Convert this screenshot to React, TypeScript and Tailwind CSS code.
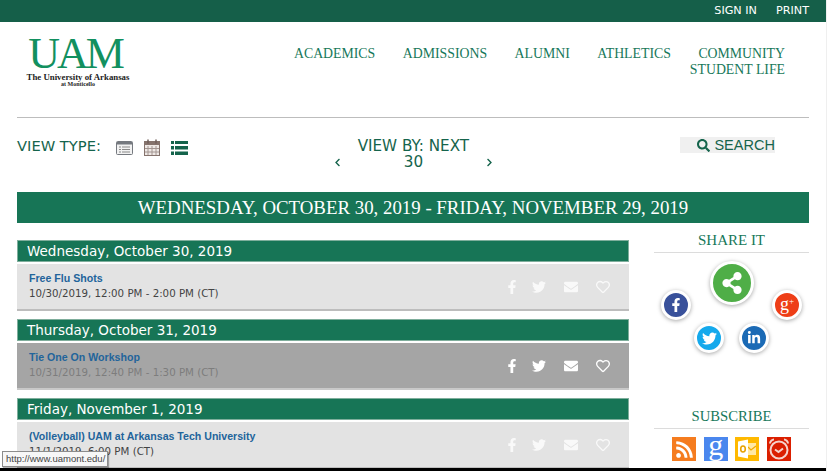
import { FaEnvelope, FaFacebookF, FaLinkedinIn, FaRegHeart, FaRss, FaSearch, FaShareAlt, FaTwitter, FaChevronLeft, FaChevronRight } from "react-icons/fa";

const serif = "font-['Liberation_Serif',serif]";
const verdana = "font-['DejaVu_Sans',sans-serif]";
const arial = "font-['Liberation_Sans',sans-serif]";

const days = [
  {
    day: "Wednesday, October 30, 2019",
    title: "Free Flu Shots",
    time: "10/30/2019, 12:00 PM - 2:00 PM (CT)",
  },
  {
    day: "Thursday, October 31, 2019",
    title: "Tie One On Workshop",
    time: "10/31/2019, 12:40 PM - 1:30 PM (CT)",
    hover: true,
  },
  {
    day: "Friday, November 1, 2019",
    title: "(Volleyball) UAM at Arkansas Tech University",
    time: "11/1/2019, 6:00 PM (CT)",
  },
];

function DayBlock({ day, title, time, hover }: { day: string; title: string; time: string; hover?: boolean }) {
  return (
    <div className="mb-[8px]">
      <div className={`${verdana} h-[22px] border border-[#7fae9c] bg-[#177556] pl-[9px] text-[13.5px] leading-[20px] text-white`}>
        {day}
      </div>
      <div
        className={`mt-[2px] flex h-[47px] items-center justify-between border-b-2 pr-[19px] pl-[12px] ${
          hover ? "border-[#c9c9c9] bg-[#a5a5a5]" : "border-[#bdbdbd] bg-[#e3e3e3]"
        }`}
      >
        <div className="pb-[2px]">
          <div className={`${arial} text-[10.6px] leading-[15px] font-bold text-[#22649b]`}>{title}</div>
          <div className={`${verdana} text-[10.25px] leading-[15px] ${hover ? "text-[#7d7d7d]" : "text-[#444]"}`}>{time}</div>
        </div>
        <div className={`flex items-center text-white ${hover ? "" : "opacity-80"}`}>
          <FaFacebookF className="h-[14px] w-[14px]" />
          <FaTwitter className="ml-[13px] h-[14px] w-[14px]" />
          <FaEnvelope className="ml-[18px] h-[14px] w-[14px]" />
          <FaRegHeart className="ml-[18px] h-[14px] w-[14px]" />
        </div>
      </div>
    </div>
  );
}

function ListViewIcon() {
  return (
    <svg width="17" height="14" viewBox="0 0 17 14">
      <rect x="0.5" y="0.5" width="16" height="13" rx="1" fill="#f2f2f2" stroke="#75797f" />
      <rect x="1" y="1" width="15" height="2.5" fill="#75797f" />
      <path d="M3 6h2M6 6h8M3 8.5h2M6 8.5h8M3 11h2M6 11h8" stroke="#8a8a8a" strokeWidth="1" />
    </svg>
  );
}

function CalendarIcon() {
  return (
    <svg width="16" height="17" viewBox="0 0 16 17">
      <rect x="0.5" y="2.5" width="15" height="14" fill="#efe9e6" stroke="#85736d" />
      <rect x="1" y="3" width="14" height="3" fill="#85736d" />
      <path d="M4 7v9M8 7v9M12 7v9M1 9.5h14M1 13h14" stroke="#a39692" strokeWidth="1" />
      <path d="M4 0.5v4M12 0.5v4" stroke="#6f5f59" strokeWidth="1.5" />
    </svg>
  );
}

function RowsIcon() {
  return (
    <svg width="17" height="14" viewBox="0 0 17 14" fill="#15644c">
      <rect x="0" y="0" width="3" height="3" />
      <rect x="4" y="0" width="13" height="3" />
      <rect x="0" y="5" width="3" height="3.5" />
      <rect x="4" y="5" width="13" height="3.5" />
      <rect x="0" y="10.5" width="3" height="3.5" />
      <rect x="4" y="10.5" width="13" height="3.5" />
    </svg>
  );
}

function Outlook() {
  return (
    <svg width="24" height="24" viewBox="0 0 24 24">
      <rect width="24" height="24" fill="#ffb900" />
      <rect x="12" y="6" width="9" height="12" fill="#ffe9a6" />
      <path d="M13 10l3 3 5-4" fill="none" stroke="#f2a900" strokeWidth="1.3" />
      <path d="M3 4.5l10-2v19l-10-2z" fill="#fff" />
      <ellipse cx="8" cy="12" rx="2.3" ry="3" fill="none" stroke="#e8a200" strokeWidth="1.6" />
    </svg>
  );
}

function Alarm() {
  return (
    <svg width="24" height="24" viewBox="0 0 24 24">
      <rect width="24" height="24" fill="#db1f00" />
      <circle cx="12" cy="13" r="8.5" fill="none" stroke="#f6d4cc" strokeWidth="2" />
      <path d="M8 12.5l3.5 2.5 4.5-3.5" fill="none" stroke="#f6d4cc" strokeWidth="2" />
      <path d="M3 6.5c0-2 2-4 4-4M21 6.5c0-2-2-4-4-4" fill="none" stroke="#f6d4cc" strokeWidth="2" />
    </svg>
  );
}

const bubble = "absolute flex items-center justify-center rounded-full border-[3px] border-white text-white shadow-[0_1px_4px_rgba(0,0,0,0.35)]";

export default function App() {
  return (
    <div className="relative flex h-[471px] w-[827px] flex-col overflow-hidden border-r border-[#efefef] bg-white">
      {/* Top bar */}
      <div className={`${verdana} flex h-[22px] shrink-0 items-center justify-end gap-[19px] bg-[#155f49] pr-[17px] text-[11.2px] text-white`}>
        <span>SIGN IN</span>
        <span>PRINT</span>
      </div>

      <div className="min-h-0 flex-1 overflow-hidden pr-[17px] pl-[17px]">
        {/* Header */}
        <div className="flex h-[96px] justify-between border-b border-[#bdbdbd]">
          <div className="w-[114px] pt-[15px] pl-[8px] text-center">
            <div className={`${serif} pr-[6px] text-[44px] leading-[33px] tracking-[-3px] text-[#12905f]`}>UAM</div>
            <div className={`${serif} mt-[3px] text-[8.8px] leading-[8px] font-bold whitespace-nowrap text-[#222] small-caps`}>The University of Arkansas</div>
            <div className={`${serif} text-[6px] leading-[6px] font-bold whitespace-nowrap text-[#222] small-caps`}>at Monticello</div>
          </div>
          <div className={`${serif} flex w-[560px] flex-wrap content-start justify-end gap-x-[27.5px] pt-[24px] pr-[24px] text-[13.8px] leading-[15.5px] text-[#17785a]`}>
            <span>ACADEMICS</span>
            <span>ADMISSIONS</span>
            <span>ALUMNI</span>
            <span>ATHLETICS</span>
            <span>COMMUNITY</span>
            <span className="w-full text-right">STUDENT LIFE</span>
          </div>
        </div>

        {/* View controls */}
        <div className={`${verdana} flex h-[74px] items-start pt-[19px] text-[#15644c]`}>
          <span className="text-[14.7px] leading-[17px]">VIEW TYPE:</span>
          <div className="ml-[15px] flex items-center gap-[11px] pt-[2px]">
            <ListViewIcon />
            <CalendarIcon />
            <RowsIcon />
          </div>
          <div className="ml-[145px] flex w-[161px] items-center justify-between pt-[1px] text-center text-[15.2px] leading-[16px]">
            <FaChevronLeft className="mt-[16px] h-[9px] w-[9px]" />
            <div className="w-[125px]">
              VIEW BY: NEXT
              <br />
              30
            </div>
            <FaChevronRight className="mt-[16px] h-[9px] w-[9px]" />
          </div>
          <div className={`${arial} ml-[186px] flex h-[16px] w-[95px] items-center justify-end gap-[4px] bg-[#f0f0f0] text-[14.5px] leading-[16px]`}>
            <FaSearch className="h-[13px] w-[13px]" />
            <span>SEARCH</span>
          </div>
        </div>

        {/* Range title */}
        <div className={`${serif} h-[31px] bg-[#177556] text-center text-[18.85px] leading-[31px] text-white`}>
          WEDNESDAY, OCTOBER 30, 2019 - FRIDAY, NOVEMBER 29, 2019
        </div>

        <div className="mt-[17px] flex justify-between">
          {/* Events */}
          <div className="w-[612px]">
            {days.map((d) => (
              <DayBlock key={d.day} {...d} />
            ))}
          </div>

          {/* Sidebar */}
          <div className="-mt-[7px] w-[155px]">
            <div className={`${serif} border-b border-[#dcdcdc] pb-[5px] text-center text-[15px] leading-[14px] text-[#17785a]`}>SHARE IT</div>
            <div className="relative h-[156px]">
              <div className={`${bubble} top-[8px] left-[56px] h-[44px] w-[44px] bg-[#4fae47]`}>
                <FaShareAlt className="h-[22px] w-[22px]" />
              </div>
              <div className={`${bubble} top-[37px] left-[7px] h-[30px] w-[30px] bg-[#39519b]`}>
                <FaFacebookF className="h-[14px] w-[14px]" />
              </div>
              <div className={`${bubble} ${serif} top-[37px] left-[118px] h-[30px] w-[30px] bg-[#ee3e17] pb-[3px] text-[18px] leading-none`}>
                g<span className="mb-[5px] text-[9px]">+</span>
              </div>
              <div className={`${bubble} top-[70px] left-[40px] h-[30px] w-[30px] bg-[#15a9ec]`}>
                <FaTwitter className="h-[15px] w-[15px]" />
              </div>
              <div className={`${bubble} top-[70px] left-[85px] h-[30px] w-[30px] bg-[#1b6ab5]`}>
                <FaLinkedinIn className="h-[14px] w-[14px]" />
              </div>
            </div>
            <div className={`${serif} border-b border-[#dcdcdc] pb-[4px] text-center text-[14.7px] leading-[15px] text-[#17785a]`}>SUBSCRIBE</div>
            <div className="mt-[8px] flex justify-center gap-[7.5px]">
              <div className="flex h-[24px] w-[24px] items-center justify-center bg-[#f57c1f] text-white">
                <FaRss className="h-[19px] w-[19px]" />
              </div>
              <div className={`${serif} flex h-[24px] w-[24px] items-center justify-center bg-[#4a87ee] pb-[8px] text-[30px] leading-none text-white`}>g</div>
              <Outlook />
              <Alarm />
            </div>
          </div>
        </div>
      </div>

      {/* Bottom edge */}
      <div className="h-[3px] shrink-0 bg-black" />

      {/* Status tooltip */}
      <div className={`${arial} absolute top-[451px] left-[2px] h-[16px] w-[106px] border border-[#8c8c8c] bg-[#f7f7f7] pl-[3px] text-[9.5px] leading-[14px] text-[#444] shadow-[1px_1px_1px_rgba(0,0,0,0.3)]`}>
        http://www.uamont.edu/
      </div>
    </div>
  );
}
